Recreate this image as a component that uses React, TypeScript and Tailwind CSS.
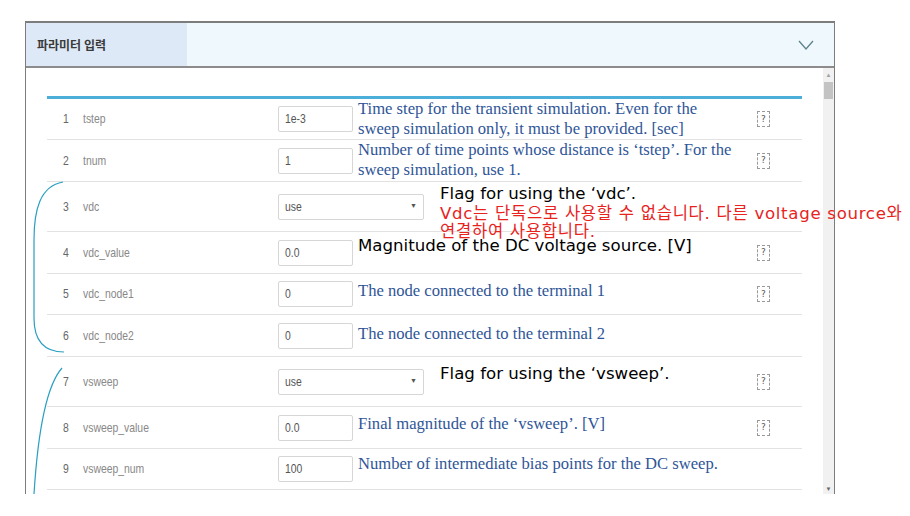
import type { ReactNode } from "react";

type Row = {
  n: number;
  name: string;
  kind: "input" | "select";
  value: string;
  height: string;
  descPad: string;
  help: boolean;
  desc: ReactNode;
};

const serif = "font-['Liberation_Serif','Times_New_Roman',serif] text-[16.6px] leading-[20px] text-[#2f5597]";
const sans = "font-['DejaVu_Sans','Noto_Sans_CJK_KR',sans-serif] text-[16.6px] leading-[20px] text-black";
const red = "font-['DejaVu_Sans','Noto_Sans_CJK_KR',sans-serif] text-[16.6px] tracking-[0.7px] text-[#e8231d]";

const rows: Row[] = [
  {
    n: 1,
    name: "tstep",
    kind: "input",
    value: "1e-3",
    height: "h-[41px]",
    descPad: "pt-0",
    help: true,
    desc: (
      <div className={serif}>
        <div>Time step for the transient simulation. Even for the</div>
        <div>sweep simulation only, it must be provided. [sec]</div>
      </div>
    ),
  },
  {
    n: 2,
    name: "tnum",
    kind: "input",
    value: "1",
    height: "h-[42px]",
    descPad: "pt-0",
    help: true,
    desc: (
      <div className={serif}>
        <div>Number of time points whose distance is ‘tstep’. For the</div>
        <div>sweep simulation, use 1.</div>
      </div>
    ),
  },
  {
    n: 3,
    name: "vdc",
    kind: "select",
    value: "use",
    height: "h-[50px]",
    descPad: "pt-[2px]",
    help: false,
    desc: (
      <div className={sans}>
        <div>Flag for using the ‘vdc’.</div>
        <div className={`${red} leading-[19px]`}>Vdc는 단독으로 사용할 수 없습니다. 다른 voltage source와</div>
        <div className={`${red} leading-[17px]`}>연결하여 사용합니다.</div>
      </div>
    ),
  },
  {
    n: 4,
    name: "vdc_value",
    kind: "input",
    value: "0.0",
    height: "h-[42px]",
    descPad: "pt-[4px]",
    help: true,
    desc: <div className={sans}>Magnitude of the DC voltage source. [V]</div>,
  },
  {
    n: 5,
    name: "vdc_node1",
    kind: "input",
    value: "0",
    height: "h-[41px]",
    descPad: "pt-[7px]",
    help: true,
    desc: <div className={serif}>The node connected to the terminal 1</div>,
  },
  {
    n: 6,
    name: "vdc_node2",
    kind: "input",
    value: "0",
    height: "h-[42px]",
    descPad: "pt-[9px]",
    help: false,
    desc: <div className={serif}>The node connected to the terminal 2</div>,
  },
  {
    n: 7,
    name: "vsweep",
    kind: "select",
    value: "use",
    height: "h-[50px]",
    descPad: "pt-[7px]",
    help: true,
    desc: <div className={sans}>Flag for using the ‘vsweep’.</div>,
  },
  {
    n: 8,
    name: "vsweep_value",
    kind: "input",
    value: "0.0",
    height: "h-[42px]",
    descPad: "pt-[7px]",
    help: true,
    desc: <div className={serif}>Final magnitude of the ‘vsweep’. [V]</div>,
  },
  {
    n: 9,
    name: "vsweep_num",
    kind: "input",
    value: "100",
    height: "h-[41px]",
    descPad: "pt-[5px]",
    help: false,
    desc: <div className={serif}>Number of intermediate bias points for the DC sweep.</div>,
  },
];

// condensed look of the original table font
function Narrow({ children }: { children: ReactNode }) {
  return (
    <span className="inline-block origin-left scale-x-[0.8] whitespace-nowrap font-['Liberation_Sans',Arial,sans-serif]">
      {children}
    </span>
  );
}

function ParamRow({ row }: { row: Row }) {
  return (
    <div className={`flex items-center border-b border-[#e2e2e2] ${row.height}`}>
      <div className="w-[36px] pl-[16px] text-[13px] text-[#666]">
        <Narrow>{row.n}</Narrow>
      </div>
      <div className="w-[195px] text-[13px] text-[#888]">
        <Narrow>{row.name}</Narrow>
      </div>
      {row.kind === "input" ? (
        <div className="flex h-[26px] w-[75px] items-center rounded-[2px] border border-[#d6d6d6] bg-white pl-[6px] text-[13px] text-[#555]">
          <Narrow>{row.value}</Narrow>
        </div>
      ) : (
        <div className="flex h-[26px] w-[146px] items-center justify-between rounded-[2px] border border-[#d6d6d6] bg-white pl-[6px] pr-[6px] text-[13px] text-[#555]">
          <Narrow>{row.value}</Narrow>
          <span className="text-[7px] text-[#555]">▼</span>
        </div>
      )}
      <div
        className={`relative z-10 min-w-0 flex-1 self-stretch whitespace-nowrap ${row.descPad} ${
          row.kind === "input" ? "ml-[5px]" : "ml-[16px]"
        }`}
      >
        {row.desc}
      </div>
      <div className="flex w-[45px] shrink-0 items-center">
        {row.help && (
          <div className="flex h-[16px] w-[13px] items-center justify-center border border-dashed border-[#9a9a9a] font-['DejaVu_Sans',sans-serif] text-[9px] leading-none text-[#555]">
            ?
          </div>
        )}
      </div>
    </div>
  );
}

function Scrollbar() {
  return (
    <div className="flex w-[11px] shrink-0 flex-col items-center bg-[#f1f1f1]">
      <div className="mt-[4px] text-[6px] leading-none text-[#a0a0a0]">▲</div>
      <div className="mt-[4px] h-[17px] w-[9px] bg-[#c3c3c3]" />
      <div className="flex-1" />
      <div className="mb-[2px] text-[6px] leading-none text-[#666]">▼</div>
    </div>
  );
}

export default function App() {
  return (
    <div className="relative h-[516px] w-[910px] overflow-hidden bg-white pl-[25px] pt-[21px]">
      <div className="flex h-[473px] w-[810px] flex-col border-x border-t-2 border-[#7d7d7d]">
        <div className="flex h-[45px] border-b-2 border-[#8c8c8c] bg-[#eff8fd]">
          <div className="flex w-[161px] items-center bg-[#dde9f6] pl-[11px] font-['Noto_Sans_CJK_KR',sans-serif] text-[12px] font-bold text-[#3a3a3a]">
            파라미터 입력
          </div>
          <div className="flex flex-1 items-center justify-end pr-[20px]">
            <svg width="16" height="10" viewBox="0 0 16 10" fill="none">
              <polyline points="1,1 8,9 15,1" stroke="#5f828d" strokeWidth="1.3" />
            </svg>
          </div>
        </div>
        <div className="flex min-h-0 flex-1">
          <div className="min-w-0 flex-1 pl-[21px] pr-[21px] pt-[28px]">
            <div className="border-t-[3px] border-[#4cafd9]">
              {rows.map((r) => (
                <ParamRow key={r.n} row={r} />
              ))}
            </div>
          </div>
          <Scrollbar />
        </div>
      </div>
      <svg
        className="pointer-events-none absolute left-0 top-0 z-20"
        width="910"
        height="516"
        viewBox="0 0 910 516"
        fill="none"
      >
        <path
          d="M 63 182 C 40 186, 34 210, 34 240 L 34 318 C 34 340, 44 352, 64 352"
          stroke="#2a9fc1"
          strokeWidth="1.2"
        />
        <path d="M 62 368 C 46 386, 38 430, 34 494" stroke="#2a9fc1" strokeWidth="1.2" />
      </svg>
    </div>
  );
}
